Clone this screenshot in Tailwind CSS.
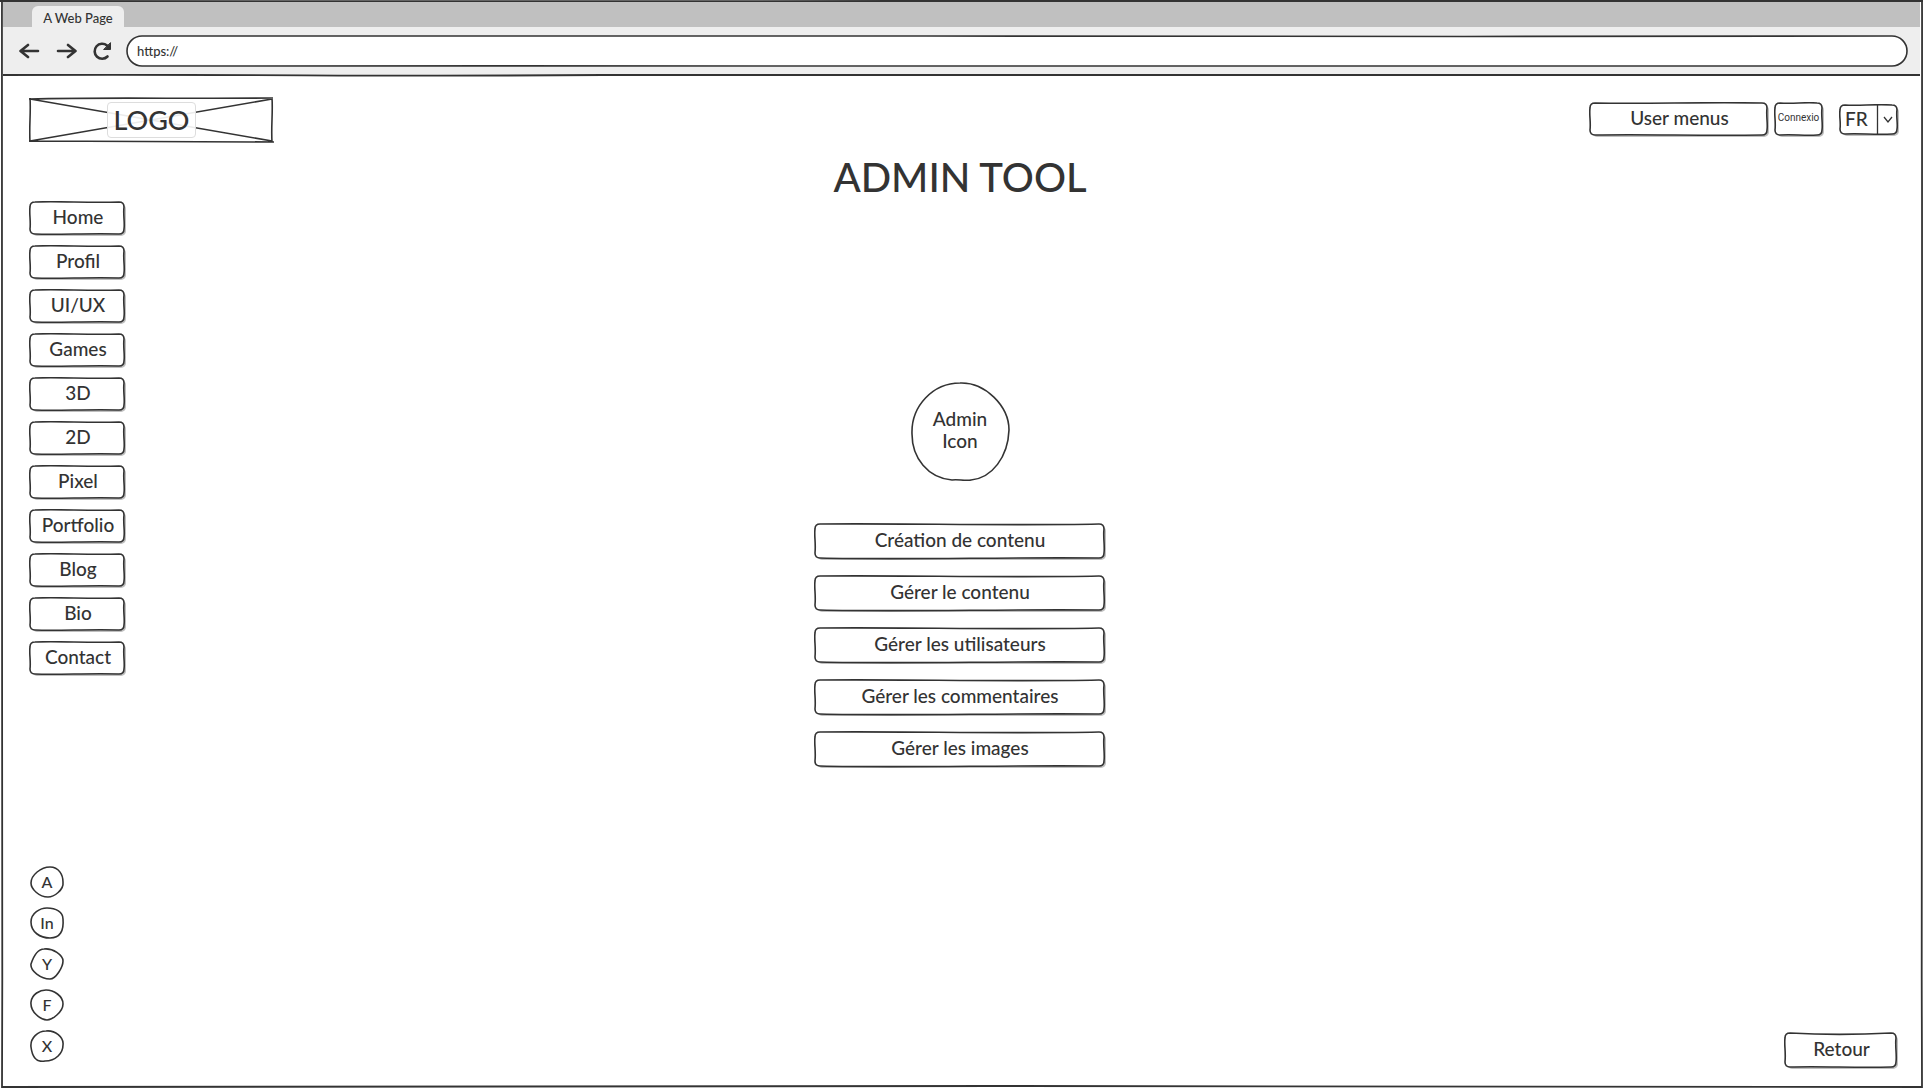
<!DOCTYPE html>
<html lang="fr">
<head>
<meta charset="utf-8">
<title>A Web Page</title>
<script src="https://cdn.jsdelivr.net/npm/@tailwindcss/browser@4"></script>
</head>
<body class="bg-white font-[Lato,sans-serif] text-[19px] leading-6 font-medium text-[#333333]">

<!-- Shared sketch outlines -->
<svg class="hidden" aria-hidden="true">
  <symbol id="sm" viewBox="0 0 98 36" preserveAspectRatio="none">
    <rect x="3" y="3" width="94" height="32" rx="5" fill="#bfbfbf"/>
    <path d="M6 1 C30 0 60 2 90 1 Q95 1 95 6 C94 14 96 22 95 28 Q95 33 90 33 C60 32 30 34 6 33 Q1 33 1 28 C2 20 0 12 1 6 Q1 1 6 1Z" fill="#fff" stroke="#333" stroke-width="1.6"/>
  </symbol>
  <symbol id="lg" viewBox="0 0 293 38" preserveAspectRatio="none">
    <rect x="3" y="3" width="289" height="34" rx="5" fill="#bfbfbf"/>
    <path d="M6 1 C90 0 190 3 285 1 Q290 1 290 6 C289 15 291 23 290 30 Q290 35 285 35 C190 34 90 37 6 35 Q1 35 1 30 C2 20 0 12 1 6 Q1 1 6 1Z" fill="#fff" stroke="#333" stroke-width="1.6"/>
  </symbol>
</svg>

<div class="relative flex min-h-screen flex-col px-[3px] pt-[2px]">

  <!-- Browser chrome -->
  <div class="flex h-[25px] items-end bg-[#c0c0c0] pl-[29px]">
    <div class="h-[21px] w-[92px] rounded-t-md bg-[#eeeeee] text-center text-[13px] leading-6">A Web Page</div>
  </div>
  <div class="flex h-[47px] items-center gap-[13px] bg-[#eeeeee] pr-3 pl-4">
    <div class="flex gap-[14px]">
      <button aria-label="Back"><svg class="h-6 w-[22px]" viewBox="0 0 22 24" fill="none" stroke="#333" stroke-width="2.6" stroke-linecap="round" stroke-linejoin="round"><path d="M19 12H2M9 6L1.500 12L9 18"/></svg></button>
      <button aria-label="Forward"><svg class="h-6 w-[22px]" viewBox="0 0 22 24" fill="none" stroke="#333" stroke-width="2.6" stroke-linecap="round" stroke-linejoin="round"><path d="M3 12H20M13 6L20.500 12L13 18"/></svg></button>
      <button aria-label="Reload"><svg class="h-6 w-[22px]" viewBox="0 0 22 24" fill="none" stroke="#333" stroke-width="2.6" stroke-linecap="round"><path d="M16.500 17.500A7.500 7.500 0 1 1 16 6.500"/><path d="M19.500 4V10.500H13Z" fill="#333" stroke-width="1" stroke-linejoin="round"/></svg></button>
    </div>
    <div class="relative h-8 flex-1">
      <svg class="absolute inset-0 h-full w-full" viewBox="0 0 1781 32" preserveAspectRatio="none" aria-hidden="true"><path d="M16 1 C300 2 500 0 800 1 C1200 0 1400 3 1765 1 A15 15 0 0 1 1765 31 C1400 32 1100 30 800 31 C500 33 300 29 16 31 A15 15 0 0 1 16 1Z" fill="#fff" stroke="#333" stroke-width="1.600"/></svg>
      <input aria-label="Address" value="https://" class="relative h-full w-full bg-transparent px-[11px] text-[13px] outline-none">
    </div>
  </div>
  <svg class="h-[3px] w-full" viewBox="0 0 1917 3" preserveAspectRatio="none" aria-hidden="true"><path d="M0 1C300 0 350 3 600 1S1100 2 1300 1S1700 2 1917 1V0H0Z" fill="#eee"/><path d="M0 1C300 0 350 3 600 1S1100 2 1300 1S1700 2 1917 1" fill="none" stroke="#333" stroke-width="1.800"/></svg>

  <!-- Page header -->
  <header class="flex items-center justify-between pt-5 pr-[21px] pl-[26px]">
    <a href="#" class="relative flex h-[46px] w-[245px] items-center justify-center">
      <svg class="absolute inset-0 h-full w-full" viewBox="0 0 245 46" fill="none" stroke="#333" stroke-width="1.600" aria-hidden="true"><path d="M0 2C80 0 160 2 244 1M1 1C2 15 0 30 1 45M0 44C80 45 160 44 245 45M243 1C244 15 242 30 243 45M1 2L243 44M1 44L243 2"/></svg>
      <span class="relative flex h-9 w-[89px] items-center justify-center rounded border border-[#dddddd] bg-white/90 text-[27px]">LOGO</span>
    </a>
    <div class="flex items-center">
      <button class="relative h-9 w-[181px] pb-1">
        <svg class="absolute inset-0 h-full w-full" aria-hidden="true" viewBox="0 0 181 36"><rect x="3" y="3" width="177" height="32" rx="5" fill="#bfbfbf"/><path d="M6 1C60 2 110 0 173 1Q178 1 178 6C177 14 179 22 178 28Q178 33 173 33C110 34 60 32 6 33Q1 33 1 28C2 20 0 12 1 6Q1 1 6 1Z" fill="#fff" stroke="#333" stroke-width="1.600"/></svg>
        <span class="relative">User menus</span>
      </button>
      <button class="relative ml-1 h-9 w-[51px] pb-1">
        <svg class="absolute inset-0 h-full w-full" aria-hidden="true" viewBox="0 0 51 36"><rect x="3" y="3" width="47" height="32" rx="5" fill="#bfbfbf"/><path d="M6 1C20 2 30 0 43 1Q48 1 48 6C47 14 49 22 48 28Q48 33 43 33C30 34 20 32 6 33Q1 33 1 28C2 20 0 12 1 6Q1 1 6 1Z" fill="#fff" stroke="#333" stroke-width="1.600"/></svg>
        <span class="relative block pr-[2px] text-center font-[Roboto,sans-serif] text-[10px] font-normal">Connexio</span>
      </button>
      <div class="relative ml-[14px] h-8 w-[60px]">
        <svg class="absolute inset-0 h-full w-full" aria-hidden="true" viewBox="0 0 60 32"><rect x="3" y="3" width="57" height="29" rx="5" fill="#bfbfbf"/><path d="M6 1C20 2 35 0 53 1Q58 1 58 6C57 12 59 20 58 25Q58 30 53 30C35 31 20 29 6 30Q1 30 1 25C2 18 0 12 1 6Q1 1 6 1Z" fill="#fff" stroke="#333" stroke-width="1.600"/><path d="M38.500 1V30M45 13L49 18L53 13" fill="none" stroke="#333" stroke-width="1.300"/></svg>
        <select aria-label="Langue" class="relative h-[30px] w-full appearance-none bg-transparent pl-[6px] outline-none"><option>FR</option></select>
      </div>
    </div>
  </header>

  <div class="grid flex-1 grid-cols-[1fr_290px_1fr] pr-[21px] pl-[26px]">
    <!-- Navigation and social links -->
    <aside class="flex flex-col justify-between pt-[58px] pb-[26px]">
      <nav class="flex w-[98px] flex-col gap-2 text-center">
        <a href="#" class="relative h-9 leading-8"><svg class="absolute inset-0 h-full w-full" aria-hidden="true"><use href="#sm"/></svg><span class="relative">Home</span></a>
        <a href="#" class="relative h-9 leading-8"><svg class="absolute inset-0 h-full w-full" aria-hidden="true"><use href="#sm"/></svg><span class="relative">Profil</span></a>
        <a href="#" class="relative h-9 leading-8"><svg class="absolute inset-0 h-full w-full" aria-hidden="true"><use href="#sm"/></svg><span class="relative">UI/UX</span></a>
        <a href="#" class="relative h-9 leading-8"><svg class="absolute inset-0 h-full w-full" aria-hidden="true"><use href="#sm"/></svg><span class="relative">Games</span></a>
        <a href="#" class="relative h-9 leading-8"><svg class="absolute inset-0 h-full w-full" aria-hidden="true"><use href="#sm"/></svg><span class="relative">3D</span></a>
        <a href="#" class="relative h-9 leading-8"><svg class="absolute inset-0 h-full w-full" aria-hidden="true"><use href="#sm"/></svg><span class="relative">2D</span></a>
        <a href="#" class="relative h-9 leading-8"><svg class="absolute inset-0 h-full w-full" aria-hidden="true"><use href="#sm"/></svg><span class="relative">Pixel</span></a>
        <a href="#" class="relative h-9 leading-8"><svg class="absolute inset-0 h-full w-full" aria-hidden="true"><use href="#sm"/></svg><span class="relative">Portfolio</span></a>
        <a href="#" class="relative h-9 leading-8"><svg class="absolute inset-0 h-full w-full" aria-hidden="true"><use href="#sm"/></svg><span class="relative">Blog</span></a>
        <a href="#" class="relative h-9 leading-8"><svg class="absolute inset-0 h-full w-full" aria-hidden="true"><use href="#sm"/></svg><span class="relative">Bio</span></a>
        <a href="#" class="relative h-9 leading-8"><svg class="absolute inset-0 h-full w-full" aria-hidden="true"><use href="#sm"/></svg><span class="relative">Contact</span></a>
      </nav>
      <div class="flex w-9 flex-col gap-[9px] text-center text-base">
        <a href="#" class="relative h-8 leading-8"><svg class="absolute inset-0 h-full w-full" viewBox="-1 0 36 32" fill="none" stroke="#333" stroke-width="1.600" aria-hidden="true"><path d="M1 17C1 9 11 1 20 1C29 1 33 9 33 16C34 24 24 31 18 31C9 31 1 23 1 17Z"/></svg><span class="relative">A</span></a>
        <a href="#" class="relative h-8 leading-8"><svg class="absolute inset-0 h-full w-full" viewBox="-1 0 36 32" fill="none" stroke="#333" stroke-width="1.600" aria-hidden="true"><path d="M1 15C1 6 10 1 17 1C26 1 33 5 33 12C34 24 30 31 20 31C10 31 1 25 1 15Z"/></svg><span class="relative">In</span></a>
        <a href="#" class="relative h-8 leading-8"><svg class="absolute inset-0 h-full w-full" viewBox="-1 0 36 32" fill="none" stroke="#333" stroke-width="1.600" aria-hidden="true"><path d="M1 16C3 10 7 1 14 1C23 0 33 7 33 13C33 19 26 31 20 31C11 31 0 23 1 16Z"/></svg><span class="relative">Y</span></a>
        <a href="#" class="relative h-8 leading-8"><svg class="absolute inset-0 h-full w-full" viewBox="-1 0 36 32" fill="none" stroke="#333" stroke-width="1.600" aria-hidden="true"><path d="M1 13C2 5 10 1 16 1C24 1 33 7 33 15C33 23 22 31 17 31C11 31 0 23 1 13Z"/></svg><span class="relative">F</span></a>
        <a href="#" class="relative h-8 leading-8"><svg class="absolute inset-0 h-full w-full" viewBox="-1 0 36 32" fill="none" stroke="#333" stroke-width="1.600" aria-hidden="true"><path d="M1 17C0 8 8 1 16 1C25 0 34 7 33 15C33 23 26 31 15 31C5 33 2 25 1 17Z"/></svg><span class="relative">X</span></a>
      </div>
    </aside>

    <!-- Admin tools -->
    <main class="flex flex-col items-center pr-2">
      <h1 class="mt-[10px] text-[40px] leading-[48px] whitespace-nowrap">ADMIN TOOL</h1>
      <div class="relative mt-[181px] flex h-[99px] w-[99px] items-center justify-center pb-1 text-center leading-[22px]">
        <svg class="absolute inset-0 h-full w-full" viewBox="0 0 99 99" fill="none" stroke="#333" stroke-width="1.600" aria-hidden="true"><path d="M49 1C74 0 98 24 98 48C97 75 81 96 60 98C54 99 46 97 41 98C17 96 1 76 1 52C0 24 22 1 49 1Z"/></svg>
        <span class="relative">Admin<br>Icon</span>
      </div>
      <div class="mt-[42px] flex w-[293px] flex-col gap-[14px]">
        <button class="relative h-[38px] pb-1"><svg class="absolute inset-0 h-full w-full" aria-hidden="true"><use href="#lg"/></svg><span class="relative">Création de contenu</span></button>
        <button class="relative h-[38px] pb-1"><svg class="absolute inset-0 h-full w-full" aria-hidden="true"><use href="#lg"/></svg><span class="relative">Gérer le contenu</span></button>
        <button class="relative h-[38px] pb-1"><svg class="absolute inset-0 h-full w-full" aria-hidden="true"><use href="#lg"/></svg><span class="relative">Gérer les utilisateurs</span></button>
        <button class="relative h-[38px] pb-1"><svg class="absolute inset-0 h-full w-full" aria-hidden="true"><use href="#lg"/></svg><span class="relative">Gérer les commentaires</span></button>
        <button class="relative h-[38px] pb-1"><svg class="absolute inset-0 h-full w-full" aria-hidden="true"><use href="#lg"/></svg><span class="relative">Gérer les images</span></button>
      </div>
    </main>

    <div class="flex items-end justify-end pb-[18px]">
      <button class="relative h-[38px] w-[115px] pb-1">
        <svg class="absolute inset-0 h-full w-full" aria-hidden="true" viewBox="0 0 115 38"><rect x="3" y="3" width="111" height="34" rx="5" fill="#bfbfbf"/><path d="M6 1C40 3 70 3 107 1Q112 1 112 6C111 15 113 23 112 30Q112 35 107 35C70 36 40 34 6 35Q1 35 1 30C2 20 0 12 1 6Q1 1 6 1Z" fill="#fff" stroke="#333" stroke-width="1.600"/></svg>
        <span class="relative">Retour</span>
      </button>
    </div>
  </div>

  <!-- Window frame -->
  <svg class="pointer-events-none absolute inset-0 h-full w-full" viewBox="0 0 1923 1088" preserveAspectRatio="none" fill="none" stroke="#333" stroke-width="1.800" aria-hidden="true"><path d="M0 1C400 0 600 2 900 1S1500 1 1923 1M2 1C1 200 3 400 2 550S3 900 2 1088M1922 1C1923 200 1921 400 1922 550S1921 900 1922 1088M2 1087C400 1086 700 1087 1000 1086S1600 1087 1922 1087"/></svg>
</div>
</body>
</html>
